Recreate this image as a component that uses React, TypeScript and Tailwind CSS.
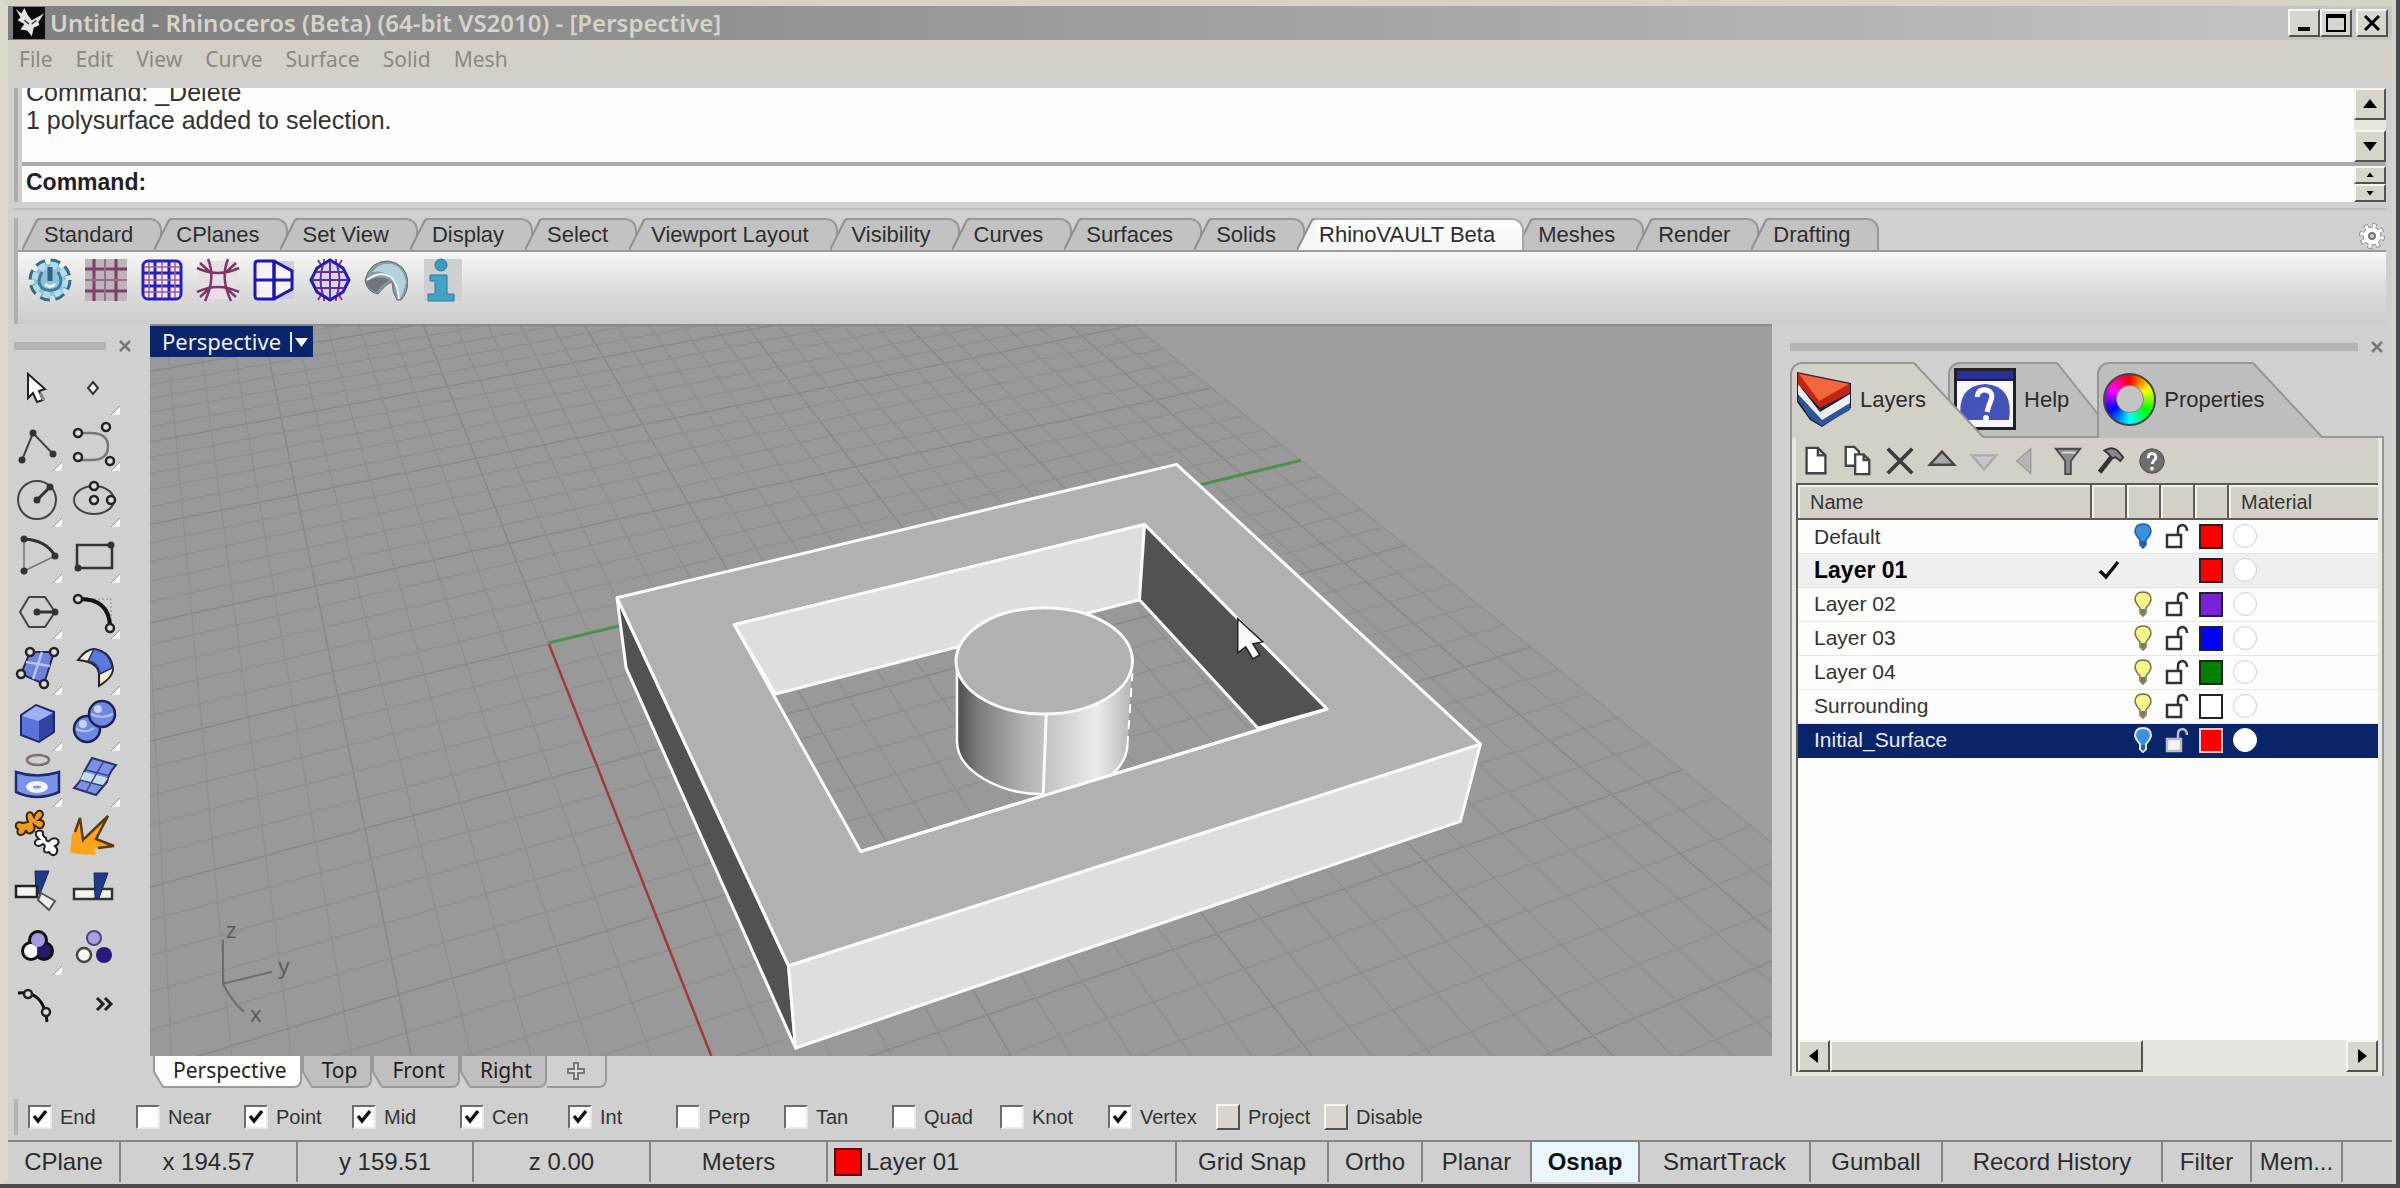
import React, { useState } from "react";

type Pt = [number, number];

const raised =
  "border-t-2 border-l-2 border-r-2 border-b-2 border-t-[#f6f5f1] border-l-[#f6f5f1] border-r-[#55524e] border-b-[#55524e] bg-[#d8d5cd]";

/* ---------- title bar and menu ---------- */

function RhinoLogo() {
  return (
    <svg viewBox="0 0 34 34" className="h-[32px] w-[34px] shrink-0" aria-hidden="true">
      <rect width="34" height="34" fill="#0b0b0b" />
      <path
        d="M3 2 L9 7 L12 1 L16 9 L20 14 L33 7 L27 16 L28 19 L22 22 L20 31 L15 25 L8 24 L12 18 L5 14 L8 11 Z"
        fill="#e4e4e4"
      />
      <path d="M12 14 L17 18 M20 18 L25 14" stroke="#333" strokeWidth="1.5" />
    </svg>
  );
}

function TitleBar() {
  return (
    <header className="flex h-[34px] items-center bg-linear-to-r from-[#7e7e7e] via-[#a0a0a0] to-[#c6c6c6] pl-1 pr-1">
      <RhinoLogo />
      <h1 className="grow truncate pl-1 font-['Noto_Sans',sans-serif] text-[24px] font-semibold leading-8 text-[#d6d3cb]">
        Untitled - Rhinoceros (Beta) (64-bit VS2010) - [Perspective]
      </h1>
      <button aria-label="Minimize" className={`flex h-7 w-8 items-end justify-center pb-1 ${raised}`}>
        <span className="h-1 w-3 bg-black" />
      </button>
      <button aria-label="Maximize" className={`flex h-7 w-8 items-center justify-center ${raised}`}>
        <span className="h-[18px] w-5 border-2 border-t-4 border-black" />
      </button>
      <button aria-label="Close" className={`ml-1 flex h-7 w-8 items-center justify-center ${raised}`}>
        <svg viewBox="0 0 18 16" className="h-4 w-[18px]" aria-hidden="true">
          <path d="M2 1 L16 15 M16 1 L2 15" stroke="#000" strokeWidth="3" />
        </svg>
      </button>
    </header>
  );
}

function MenuBar() {
  const items = ["File", "Edit", "View", "Curve", "Surface", "Solid", "Mesh"];
  return (
    <nav className="flex h-10 items-center gap-[23px] bg-[#d3d0c8] pl-[11px] font-['Noto_Sans',sans-serif] text-[21px] text-[#8b8880]">
      {items.map((m) => (
        <button key={m}>{m}</button>
      ))}
    </nav>
  );
}

function Tri({ dir, small }: { dir: "up" | "down" | "left" | "right"; small?: boolean }) {
  const d = {
    up: "M8 3 L15 12 L1 12 Z",
    down: "M8 13 L15 4 L1 4 Z",
    left: "M3 8 L12 1 L12 15 Z",
    right: "M13 8 L4 1 L4 15 Z",
  }[dir];
  return (
    <svg viewBox="0 0 16 16" className={small ? "size-2" : "size-4"} aria-hidden="true">
      <path d={d} fill="#000" />
    </svg>
  );
}

function CommandArea() {
  return (
    <section className="px-[6px] pt-2">
      <div className="flex border-l-4 border-[#adadad]">
        <div className="ml-1 min-w-0 grow">
          <div className="flex">
            <div className="flex h-[74px] grow flex-col justify-end overflow-hidden bg-[#fdfdfd] pl-1 text-[25px] leading-7 text-[#333]">
              <p>Command: _Delete</p>
              <p>1 polysurface added to selection.</p>
              <p className="h-7 shrink-0" />
            </div>
            <div className="flex w-8 flex-col justify-between bg-[#e9e6df]">
              <button aria-label="Scroll history up" className={`flex h-8 items-center justify-center ${raised}`}>
                <Tri dir="up" />
              </button>
              <button aria-label="Scroll history down" className={`flex h-8 items-center justify-center ${raised}`}>
                <Tri dir="down" />
              </button>
            </div>
          </div>
          <div className="flex border-t-4 border-[#a9a9a9]">
            <label className="flex h-9 grow items-center bg-[#fdfdfd] pb-1 pl-1 text-[23px] font-bold text-[#222]">
              Command:
              <input className="ml-2 grow bg-transparent font-normal outline-none" />
            </label>
            <div className="flex w-8 flex-col">
              <button aria-label="Previous line" className={`flex grow items-center justify-center ${raised}`}>
                <Tri dir="up" small />
              </button>
              <button aria-label="Next line" className={`flex grow items-center justify-center ${raised}`}>
                <Tri dir="down" small />
              </button>
            </div>
          </div>
        </div>
      </div>
    </section>
  );
}

/* ---------- tool tabs ---------- */

const toolTabs = [
  "Standard", "CPlanes", "Set View", "Display", "Select", "Viewport Layout", "Visibility",
  "Curves", "Surfaces", "Solids", "RhinoVAULT Beta", "Meshes", "Render", "Drafting",
];

function ToolTab({ name, active, onClick }: { name: string; active: boolean; onClick: () => void }) {
  return (
    <button
      role="tab"
      aria-selected={active}
      onClick={onClick}
      className={`relative -mr-2 flex h-8 ${active ? "z-10" : ""}`}
    >
      <svg viewBox="0 0 18 32" className="h-8 w-[18px] shrink-0" aria-hidden="true">
        <path d="M0 32 L14 4 Q15 1 18 1 L18 32 Z" fill={active ? "#f6f6f6" : "#c2c2c2"} />
        <path d="M0 32 L14 4 Q15 1 18 1" fill="none" stroke="#8f8f8f" strokeWidth="2" />
      </svg>
      <span
        className={`h-8 whitespace-nowrap rounded-tr-xl border-r-2 border-t-2 pl-1 pr-[27px] leading-[30px] ${
          active ? "border-[#a8a8a8] bg-linear-to-b from-white to-[#f4f4f4]" : "border-[#989898] bg-[#c2c2c2]"
        }`}
      >
        {name}
      </span>
    </button>
  );
}

function Gear() {
  return (
    <svg viewBox="0 0 28 28" className="size-7" aria-hidden="true">
      <circle cx="14" cy="14" r="10" fill="none" stroke="#8a8a8a" strokeWidth="6" strokeDasharray="4 3.85" />
      <circle cx="14" cy="14" r="9" fill="#fff" stroke="#8a8a8a" strokeWidth="1" />
      <circle cx="14" cy="14" r="10" fill="none" stroke="#fff" strokeWidth="4" strokeDasharray="3 4.85" strokeDashoffset="-.5" />
      <circle cx="14" cy="14" r="3" fill="#ccc" stroke="#777" strokeWidth="2" />
    </svg>
  );
}

const vaultIcons: { label: string; art: React.ReactNode }[] = [
  {
    label: "Settings",
    art: (
      <>
        <circle cx="22" cy="22" r="18" fill="none" stroke="#2f6f8c" strokeWidth="7" strokeDasharray="9 5.14" />
        <circle cx="22" cy="22" r="16" fill="#8fc3da" />
        <circle cx="22" cy="22" r="15" fill="none" stroke="#b5dced" strokeWidth="7" strokeDasharray="7 4.78" />
        <path d="M14 14 Q8 24 14 30 Q22 35 30 30 Q36 24 30 14" fill="none" stroke="#3a7f9c" strokeWidth="3" />
        <path d="M22 9 V23" stroke="#2b6580" strokeWidth="5" />
        <path d="M17 26 Q22 31 27 26" fill="none" stroke="#e5f5fb" strokeWidth="3" />
      </>
    ),
  },
  {
    label: "Form diagram",
    art: (
      <>
        <rect x="1" y="1" width="42" height="42" fill="#bdb5ba" />
        <path d="M10 1 V43 M32 1 V43 M1 11 H43 M1 33 H43" stroke="#7d3f66" strokeWidth="3" />
        <path d="M21 1 V43 M1 22 H43" stroke="#94708a" strokeWidth="2" />
      </>
    ),
  },
  {
    label: "Force diagram",
    art: (
      <>
        <rect x="3" y="3" width="38" height="38" rx="5" fill="#f2e9f6" stroke="#2a20b8" strokeWidth="3" />
        <path d="M15 3 V41 M29 3 V41 M3 15 H41 M3 28 H41" stroke="#2a20b8" strokeWidth="3" />
        <path d="M9 4 V40 M22 4 V40 M35 4 V40 M4 9 H40 M4 22 H40 M4 34 H40" stroke="#9a5aa8" strokeWidth="1.5" />
      </>
    ),
  },
  {
    label: "Relax",
    art: (
      <>
        <rect x="3" y="3" width="38" height="38" fill="#e8dfe5" />
        <path
          d="M12 1 Q20 20 9 43 M32 1 Q24 20 35 43 M1 10 Q22 20 43 10 M1 34 Q22 24 43 34 M4 5 L16 16 M40 5 L28 16 M4 39 L16 28 M40 39 L28 28"
          fill="none"
          stroke="#7c3767"
          strokeWidth="2.5"
        />
      </>
    ),
  },
  {
    label: "Horizontal equilibrium",
    art: (
      <>
        <rect x="20" y="3" width="22" height="38" fill="#cfcbea" />
        <path d="M22 3 H6 Q3 3 3 6 V38 Q3 41 6 41 H22 Z M22 3 L40 13 V31 L22 41" fill="#f4f2fb" stroke="#1f18ad" strokeWidth="3" />
        <path d="M22 3 V41 M3 22 H41" stroke="#1f18ad" strokeWidth="3" />
      </>
    ),
  },
  {
    label: "Vertical equilibrium",
    art: (
      <>
        <path d="M10 2 L34 42 M34 2 L10 42 M16 1 V43 M28 1 V43" stroke="#8d3c6f" strokeWidth="2" />
        <path d="M22 2 L35 10 L41 22 L35 34 L22 42 L9 34 L3 22 L9 10 Z" fill="#dcd3f0" stroke="#2119b8" strokeWidth="3" />
        <path d="M15 7 Q10 22 15 37 M29 7 Q34 22 29 37 M22 3 V41 M4 22 H40 M8 14 H36 M8 30 H36" fill="none" stroke="#5c2fa5" strokeWidth="2" />
      </>
    ),
  },
  {
    label: "Vault surface",
    art: (
      <>
        <path d="M1 22 Q6 3 24 3 Q42 5 44 24 Q43 36 37 42 H33 Q28 34 28 24 Q22 26 14 36 Q3 34 1 22 Z" fill="#8e9a9f" stroke="#5d6a70" strokeWidth="1" />
        <path d="M8 14 Q16 4 28 6 Q40 10 42 24 Q40 34 36 40 Q34 24 27 18 Q18 12 8 14 Z" fill="#b3d3dc" />
        <path d="M3 22 Q16 12 27 19 Q34 26 35 41" fill="none" stroke="#e8f4f6" strokeWidth="2" />
        <path d="M2 24 Q14 16 26 22 Q18 26 13 34 Q4 32 2 24 Z" fill="#6f7578" />
      </>
    ),
  },
  {
    label: "About",
    art: (
      <>
        <rect x="4" y="1" width="38" height="42" fill="#cfcfcf" />
        <circle cx="21" cy="7" r="6" fill="#3a9cc0" stroke="#2b7896" strokeWidth="1" />
        <path d="M10 17 H27 V36 H34 V43 H8 V36 H15 V23 H10 Z" fill="#43a3c6" stroke="#2b7896" strokeWidth="1" />
      </>
    ),
  },
];

function ToolTabs() {
  const [tab, setTab] = useState("RhinoVAULT Beta");
  return (
    <section className="mt-[6px] px-[6px]">
      <div className="border-t-2 border-[#bcbcbc] pt-2">
        <div className="border-l-4 border-[#b0b0b0]">
          <div className="flex items-end justify-between pl-1 text-[22px] text-[#2e2e2e]">
            <div role="tablist" className="flex">
              {toolTabs.map((t) => (
                <ToolTab key={t} name={t} active={t === tab} onClick={() => setTab(t)} />
              ))}
            </div>
            <button aria-label="Toolbar options">
              <Gear />
            </button>
          </div>
          <div className="flex h-[74px] items-center gap-3 border-t-2 border-[#9b9b9b] bg-linear-to-b from-[#f7f7f7] via-[#dedede] to-[#cccccc] pb-4 pl-[10px]">
            {vaultIcons.map((i) => (
              <button key={i.label} aria-label={i.label} className="size-11">
                <svg viewBox="0 0 44 44" className="size-11" aria-hidden="true">
                  {i.art}
                </svg>
              </button>
            ))}
          </div>
        </div>
      </div>
    </section>
  );
}

/* ---------- left palette ---------- */

const ln = { fill: "none", stroke: "#444", strokeWidth: 2 } as const;
const dot = (x: number, y: number) => <circle key={`d${x},${y}`} cx={x} cy={y} r="3.5" fill="#333" />;
const ring = (x: number, y: number) => (
  <circle key={`r${x},${y}`} cx={x} cy={y} r="4" fill="#ddd" stroke="#222" strokeWidth="2.5" />
);

const palette: { label: string; flyout?: boolean; art: React.ReactNode }[] = [
  {
    label: "Select",
    art: (
      <>
        <path d="M20 14 V38 L25 33 L29 42 L35 40 L31 31 L37 29 Z" fill="#fff" stroke="#222" strokeWidth="2" />
        <path d="M32 33 L36 40" stroke="#888" strokeWidth="3" />
      </>
    ),
  },
  { label: "Point", flyout: true, art: <path d="M27 22 L32 28 L27 34 L22 28 Z" fill="#eee" stroke="#333" strokeWidth="2" /> },
  {
    label: "Polyline",
    flyout: true,
    art: (
      <>
        <path d="M14 44 L25 17 L45 38" {...ln} />
        {dot(14, 44)}
        {dot(25, 17)}
        {dot(45, 38)}
      </>
    ),
  },
  {
    label: "Curve",
    flyout: true,
    art: (
      <>
        <path d="M12 17 H26 Q42 18 42 30 Q42 44 26 44 H12" fill="none" stroke="#777" strokeWidth="2.5" />
        {ring(12, 17)}
        {ring(12, 41)}
        {ring(40, 11)}
        {ring(44, 45)}
      </>
    ),
  },
  {
    label: "Circle",
    flyout: true,
    art: (
      <>
        <circle cx="29" cy="28" r="19" {...ln} />
        <path d="M29 28 L42 15" stroke="#333" strokeWidth="3" />
        {dot(29, 28)}
        {dot(42, 15)}
      </>
    ),
  },
  {
    label: "Ellipse",
    flyout: true,
    art: (
      <>
        <ellipse cx="28" cy="28" rx="20" ry="14" {...ln} />
        {ring(28, 14)}
        {ring(28, 28)}
        {ring(45, 28)}
      </>
    ),
  },
  {
    label: "Arc",
    flyout: true,
    art: (
      <>
        <path d="M16 43 V11 M16 43 L47 28" stroke="#777" strokeWidth="1.5" />
        <path d="M16 11 Q38 12 47 28" fill="none" stroke="#333" strokeWidth="3" />
        {dot(16, 11)}
        {dot(16, 43)}
        {dot(47, 28)}
      </>
    ),
  },
  {
    label: "Rectangle",
    flyout: true,
    art: (
      <>
        <rect x="11" y="17" width="35" height="23" fill="none" stroke="#333" strokeWidth="2.5" />
        {dot(45, 17)}
        {dot(12, 40)}
      </>
    ),
  },
  {
    label: "Polygon",
    flyout: true,
    art: (
      <>
        <path d="M12 28 L21 13 H37 L47 28 L37 43 H21 Z" {...ln} />
        <path d="M29 28 H47" stroke="#333" strokeWidth="3" />
        {dot(29, 28)}
        {dot(47, 28)}
      </>
    ),
  },
  {
    label: "Fillet",
    flyout: true,
    art: (
      <>
        <path d="M12 15 H45 V44" fill="none" stroke="#888" strokeWidth="1" strokeDasharray="2 2" />
        <path d="M12 15 Q44 14 44 44" fill="none" stroke="#111" strokeWidth="4" />
        {ring(12, 15)}
        {ring(44, 44)}
      </>
    ),
  },
  {
    label: "Surface from points",
    flyout: true,
    art: (
      <>
        <path d="M22 12 H46 L36 44 L13 34 Z" fill="#6f82d8" stroke="#222a60" strokeWidth="2" />
        <path d="M34 12 L25 39 M18 22 L42 26" stroke="#b9c4f4" strokeWidth="2.5" />
        {ring(22, 12)}
        {ring(46, 12)}
        {ring(13, 34)}
        {ring(36, 44)}
      </>
    ),
  },
  {
    label: "Surface",
    flyout: true,
    art: (
      <>
        <path d="M12 20 Q20 9 28 9 Q46 12 47 30 Q46 38 33 46 V36 Q34 22 12 20 Z" fill="#f4eed2" stroke="#222" strokeWidth="2" />
        <path d="M28 9 Q44 12 46 28 L34 34 Q32 22 22 21 Z" fill="#5c78de" stroke="#26326f" strokeWidth="1.5" />
      </>
    ),
  },
  {
    label: "Box",
    flyout: true,
    art: (
      <>
        <path d="M13 19 L28 9 L46 16 V36 L31 46 L13 39 Z" fill="#5b74dc" stroke="#1d2763" strokeWidth="2" />
        <path d="M14 20 L28 10 L45 17 L30 25 Z" fill="#9db2f6" />
        <path d="M31 25 L45 17 V36 L31 45 Z" fill="#31459f" />
      </>
    ),
  },
  {
    label: "Boolean",
    flyout: true,
    art: (
      <>
        <circle cx="21" cy="33" r="13" fill="#6f88e2" stroke="#1a2358" strokeWidth="2.5" />
        <circle cx="36" cy="18" r="13" fill="#6f88e2" stroke="#1a2358" strokeWidth="2.5" />
        <path d="M10 33 Q20 38 28 32 M25 18 Q36 24 47 18" fill="none" stroke="#b5c4f8" strokeWidth="2" />
        <circle cx="17" cy="28" r="4" fill="#c6d3fb" />
        <circle cx="32" cy="13" r="4" fill="#c6d3fb" />
      </>
    ),
  },
  {
    label: "Project",
    flyout: true,
    art: (
      <>
        <ellipse cx="30" cy="8" rx="11" ry="5" fill="none" stroke="#806c68" strokeWidth="2.5" />
        <path d="M8 20 Q29 27 51 20 V40 Q29 50 8 40 Z" fill="#7b93e8" stroke="#1c2a70" strokeWidth="2.5" />
        <ellipse cx="29" cy="35" rx="11" ry="6" fill="#f2f5ff" />
        <ellipse cx="29" cy="35" rx="4" ry="1.5" fill="#7b93e8" />
      </>
    ),
  },
  {
    label: "Mesh",
    flyout: true,
    art: (
      <>
        <path d="M26 6 L50 13 Q42 22 41 30 L30 43 L8 36 Q16 28 18 20 Z" fill="#7e92e4" stroke="#26336f" strokeWidth="2" />
        <path d="M18 20 L42 26 L36 34 L14 28 Z" fill="#c4dbe8" />
        <path d="M38 9 Q30 22 20 40 M20 18 L44 24 M14 28 L37 34" fill="none" stroke="#3a4788" strokeWidth="1.5" />
      </>
    ),
  },
  {
    label: "Join",
    art: (
      <>
        <path
          d="M19 6 Q21 3 24 5 L26 9 Q27 5 30 3 Q35 2 35 7 Q34 10 31 12 Q36 12 36 16 Q35 21 30 20 L26 17 Q28 23 23 25 Q19 27 18 22 Q17 27 12 27 Q8 26 10 21 Q7 20 8 16 Q10 13 15 15 L20 14 Q18 9 19 6 Z"
          fill="#f39a1f"
          stroke="#3a2608"
          strokeWidth="2"
        />
        <path
          d="M28 24 Q32 21 35 24 Q34 28 38 30 Q38 34 41 33 Q46 28 50 32 Q52 36 47 38 Q51 42 48 46 Q44 49 41 44 Q36 46 36 41 Q38 37 35 36 Q30 40 27 36 Q26 32 31 31 Q27 28 28 24 Z"
          fill="#fff"
          stroke="#222"
          strokeWidth="2"
        />
      </>
    ),
  },
  {
    label: "Explode",
    art: (
      <>
        <path d="M6 27 L13 16 L17 33 L40 10 L30 31 L46 38 L28 41 L30 47 L12 46 L4 44 Z" fill="#f8a51d" />
        <path d="M9 24 L14 10 L17 32 L42 8 L30 31 L48 38 L32 40" fill="none" stroke="#5b3a10" strokeWidth="2.5" />
      </>
    ),
  },
  {
    label: "Trim",
    art: (
      <>
        <path d="M27 7 H41 L32 30 L28 30 Z" fill="#1f3a86" stroke="#14265c" />
        <path d="M8 22 H29 V33 H8 Z" fill="#f5f3ec" stroke="#222" strokeWidth="2.5" />
        <path d="M33 29 L47 37 L41 46 L30 36 Z" fill="#eee" stroke="#555" strokeWidth="2" />
      </>
    ),
  },
  {
    label: "Split",
    art: (
      <>
        <path d="M8 25 H46 V35 H8 Z" fill="#f5f3ec" stroke="#333" strokeWidth="2.5" />
        <path d="M28 9 H42 L33 34 H29 Z" fill="#1f3a86" stroke="#14265c" />
      </>
    ),
  },
  {
    label: "Group",
    flyout: true,
    art: (
      <>
        <g fill="none" stroke="#111" strokeWidth="6">
          <circle cx="30" cy="20" r="7" />
          <circle cx="23" cy="31" r="7" />
          <circle cx="36" cy="31" r="7" />
        </g>
        <circle cx="23" cy="31" r="7" fill="#fff" />
        <circle cx="36" cy="31" r="7" fill="#271a6c" />
        <circle cx="30" cy="20" r="7" fill="#a49ae0" />
      </>
    ),
  },
  {
    label: "Ungroup",
    art: (
      <>
        <circle cx="28" cy="18" r="7" fill="#a9a0e2" stroke="#4a4480" strokeWidth="2" />
        <circle cx="18" cy="35" r="7" fill="#fbf8ee" stroke="#444" strokeWidth="2.5" />
        <circle cx="38" cy="35" r="8" fill="#271a7c" />
      </>
    ),
  },
  {
    label: "Edit points",
    art: (
      <>
        <path d="M10 17 Q36 14 39 46" fill="none" stroke="#111" strokeWidth="3" />
        {ring(20, 18)}
        {ring(38, 36)}
      </>
    ),
  },
  { label: "More tools", art: <path d="M31 22 L37 28 L31 34 M39 22 L45 28 L39 34" fill="none" stroke="#222" strokeWidth="3" /> },
];

function CloseX({ label }: { label: string }) {
  return (
    <button aria-label={label} className="shrink-0">
      <svg viewBox="0 0 14 14" className="size-3.5" aria-hidden="true">
        <path d="M2 2 L12 12 M12 2 L2 12" stroke="#777" strokeWidth="2.5" />
      </svg>
    </button>
  );
}

function Palette() {
  return (
    <aside className="w-[142px] shrink-0">
      <div className="flex h-[36px] items-center gap-3 pl-[6px] pt-2">
        <div className="h-2 w-[92px] bg-[#b4b4b4]" />
        <CloseX label="Close palette" />
      </div>
      <div className="grid w-[116px] grid-cols-2">
        {palette.map((p) => (
          <button key={p.label} aria-label={p.label} className="h-14">
            <svg viewBox="0 0 58 56" className="h-14 w-full" aria-hidden="true">
              {p.art}
              {p.flyout && <path d="M54 46 V55 H45 Z" fill="#fff" />}
              {p.flyout && <path d="M54 46 L45 55" stroke="#999" strokeWidth="1" />}
            </svg>
          </button>
        ))}
      </div>
    </aside>
  );
}

/* ---------- viewport ---------- */

const ORIGIN: Pt = [550, 641];
const VANISH_X: Pt = [92, -522];
const VANISH_Y: Pt = [5376, -537];
const STEP_X = 0.0189;
const STEP_Y = 0.00836;

function project(u: number, v: number): string {
  const a = u * STEP_X;
  const b = v * STEP_Y;
  const w = 1 + a + b;
  const x = (ORIGIN[0] + a * VANISH_X[0] + b * VANISH_Y[0]) / w;
  const y = (ORIGIN[1] + a * VANISH_X[1] + b * VANISH_Y[1]) / w;
  return `${x.toFixed(1)} ${y.toFixed(1)}`;
}

const U_FAR = 40;
const U_NEAR = -33;
const V_MAX = 22;

function gridPath(major: boolean): string {
  const parts: string[] = [];
  for (let v = -V_MAX; v <= V_MAX; v++) {
    if ((v % 5 === 0) === major) parts.push(`M${project(U_FAR, v)} L${project(U_NEAR, v)}`);
  }
  for (let u = U_NEAR; u <= U_FAR; u++) {
    if ((u % 5 === 0) === major) parts.push(`M${project(u, -V_MAX)} L${project(u, V_MAX)}`);
  }
  return parts.join(" ");
}

const minorGrid = gridPath(false);
const majorGrid = gridPath(true);

function Scene() {
  return (
    <svg
      viewBox="150 324 1622 728"
      preserveAspectRatio="xMidYMid slice"
      className="h-full w-full"
      role="img"
      aria-label="Shaded frame with a cylinder on the construction plane"
    >
      <defs>
        <linearGradient id="cyl" x1="0" x2="1" y1="0" y2="0">
          <stop offset="0" stopColor="#4c4c4c" />
          <stop offset="0.12" stopColor="#7c7c7c" />
          <stop offset="0.4" stopColor="#b4b4b4" />
          <stop offset="0.6" stopColor="#d0d0d0" />
          <stop offset="0.8" stopColor="#ececec" />
          <stop offset="1" stopColor="#b4b4b4" />
        </linearGradient>
      </defs>
      <rect x="-400" y="0" width="3000" height="1400" fill="#9d9d9d" />
      <path
        d={`M${project(U_FAR, -V_MAX)} L${project(U_FAR, V_MAX)} L${project(U_NEAR, V_MAX)} L${project(U_NEAR, -V_MAX)} Z`}
        fill="#999999"
      />
      <path d={minorGrid} stroke="#8f8f8f" strokeWidth="1.2" fill="none" />
      <path d={majorGrid} stroke="#898989" strokeWidth="1.4" fill="none" />
      <path d="M550 641 L712 1052" stroke="#a03a3c" strokeWidth="2.5" />
      <path d="M550 640 L1300 458" stroke="#4a9150" strokeWidth="3" />

      <g stroke="#fafafa" strokeWidth="3" strokeLinejoin="round">
        <path d="M618 595 L789 962 L796 1044 L627 665 Z" fill="#525252" />
        <path d="M789 962 L1479 741 L1459 818 L796 1044 Z" fill="#dedede" />
        <path
          fillRule="evenodd"
          d="M618 595 L1176 462 L1479 741 L789 962 Z M735 622 L861 848 L1326 706 L1144 522 Z"
          fill="#b1b1b1"
        />
        <path d="M735 622 L1144 522 L1139 597 L776 691 Z" fill="#dedede" />
        <path d="M1144 522 L1326 706 L1257 725 L1139 597 Z" fill="#525252" />
      </g>

      <path
        d="M957 658 V738 C957 768 1000 791 1043 791 L1112 771 Q1126 758 1127 742 L1132 658 Z"
        fill="url(#cyl)"
      />
      <path d="M957 658 V738 C957 768 1000 791 1043 791 M1112 771 Q1126 758 1127 742" fill="none" stroke="#fafafa" strokeWidth="2.5" />
      <path d="M1127 742 L1132 670" stroke="#fafafa" strokeWidth="2" strokeDasharray="9 7" />
      <path d="M1046 711 L1043 791" stroke="#fafafa" strokeWidth="3" />
      <ellipse cx="1044" cy="658" rx="88" ry="53" fill="#b1b1b1" stroke="#fafafa" strokeWidth="3" />
      <path d="M861 848 L1326 706" stroke="#fafafa" strokeWidth="3" />

      <path d="M1237 616 V650 L1245 644 L1252 656 L1259 652 L1252 641 L1262 639 Z" fill="#fafafa" stroke="#222" strokeWidth="1.5" />

      <path d="M225 936 V980 L274 968 M225 980 Q234 998 246 1008" fill="none" stroke="#6c6c6c" strokeWidth="2" />
      <g fill="#5c5c5c" fontSize="22" fontFamily="'Noto Sans', sans-serif">
        <text x="228" y="934">z</text>
        <text x="280" y="970">y</text>
        <text x="252" y="1018">x</text>
      </g>
    </svg>
  );
}

function ViewTab({ name, active, onClick }: { name: string; active: boolean; onClick: () => void }) {
  return (
    <button
      role="tab"
      aria-selected={active}
      onClick={onClick}
      className={`relative flex h-8 items-center rounded-b-lg border-b-2 border-r-2 border-[#999] pl-5 pr-[13px] ${
        active ? "bg-white" : "bg-[#bfbfbf]"
      }`}
    >
      <svg viewBox="0 0 12 32" className="absolute left-0 top-0 h-8 w-3" aria-hidden="true">
        <path d="M0 0 V16 L10 32 H0 Z" fill="#d0d0d0" />
        <path d="M1 0 V16 L10 31" fill="none" stroke="#999" strokeWidth="2" />
      </svg>
      {name}
    </button>
  );
}

function Viewport() {
  const [view, setView] = useState("Perspective");
  return (
    <main className="flex min-w-0 grow flex-col">
      <div className="relative min-h-0 grow basis-0 overflow-hidden border-t-2 border-[#8a8a8a]">
        <div className="absolute inset-0">
          <Scene />
        </div>
        <button className="absolute left-0 top-0 flex h-[31px] items-center gap-2 bg-[#0a246a] pl-3 pr-1 font-['Noto_Sans',sans-serif] text-[22px] text-[#eef0f8]">
          {view}
          <svg viewBox="0 0 20 24" className="h-6 w-5" aria-hidden="true">
            <path d="M2 2 V22" stroke="#dfe3f2" strokeWidth="2" />
            <path d="M6 8 H19 L12.5 17 Z" fill="#fff" />
          </svg>
        </button>
      </div>
      <div role="tablist" className="flex h-[38px] pl-[3px] font-['Noto_Sans',sans-serif] text-[21px] text-[#222]">
        {["Perspective", "Top", "Front", "Right"].map((v) => (
          <ViewTab key={v} name={v} active={v === view} onClick={() => setView(v)} />
        ))}
        <button aria-label="New viewport" className="relative flex h-8 w-[60px] items-center justify-center rounded-br-lg border-b-2 border-r-2 border-[#999] bg-[#d0d0d0]">
          <svg viewBox="0 0 20 20" className="size-5" aria-hidden="true">
            <path d="M8 2 H12 V8 H18 V12 H12 V18 H8 V12 H2 V8 H8 Z" fill="#ddd" stroke="#777" strokeWidth="2" />
          </svg>
        </button>
      </div>
    </main>
  );
}

/* ---------- layers panel ---------- */

function PanelTab({
  name, icon, fill, slant, className = "",
}: { name: string; icon: React.ReactNode; fill: "active" | "idle"; slant: string; className?: string }) {
  const active = fill === "active";
  return (
    <button role="tab" aria-selected={active} className={`flex h-[76px] shrink-0 ${className}`}>
      <span
        className={`flex h-[76px] items-center gap-2 rounded-tl-xl border-l-2 border-t-2 border-[#959595] pb-1 pl-1 ${
          active ? "bg-[#d3d0c8]" : "bg-[#bebebe]"
        }`}
      >
        {icon}
        <span className="relative z-20 -mr-3">{name}</span>
      </span>
      <svg viewBox="0 0 70 76" preserveAspectRatio="none" className={`h-[76px] shrink-0 ${slant}`} aria-hidden="true">
        <path d="M0 1 L70 76 H0 Z" fill={active ? "#d3d0c8" : "#bebebe"} />
        <path d="M0 1 L70 76" stroke="#959595" strokeWidth="2" />
      </svg>
    </button>
  );
}

const LayersIcon = (
  <svg viewBox="0 0 56 58" className="h-[58px] w-14" aria-hidden="true">
    <path d="M1 2 L55 13 V38 L26 57 L14 50 L1 32 Z" fill="#16203c" />
    <path d="M2 20 L24 48 L54 32 V40 L26 56 L14 48 L2 30 Z" fill="#2f5596" />
    <path d="M2 14 L24 42 L54 24 V33 L26 50 L2 24 Z" fill="#eceef6" />
    <path d="M2 3 L54 14 V23 L24 38 L2 14 Z" fill="#c32513" />
    <path d="M3 4 L53 14 L23 31 Z" fill="#f2683c" />
  </svg>
);

const HelpIcon = (
  <svg viewBox="0 0 62 62" className="h-[62px] w-[62px]" aria-hidden="true">
    <rect x="1.5" y="1.5" width="59" height="59" fill="#f5f5fb" stroke="#222" strokeWidth="3" />
    <rect x="3" y="3" width="56" height="8" fill="#2a2f9c" />
    <path d="M2 12 H60" stroke="#222" strokeWidth="2" />
    <path d="M7 52 Q2 18 31 16 Q60 18 55 52 Z" fill="#4552b8" />
    <path d="M23 29 Q24 21 32 22 Q40 24 37 32 Q35 37 33 44" fill="none" stroke="#fff" strokeWidth="5" />
    <circle cx="32" cy="50" r="3" fill="#fff" />
  </svg>
);

const PropertiesIcon = (
  <span className="flex size-[53px] items-center justify-center rounded-full border-2 border-[#444] bg-[conic-gradient(#f00,#ff0,#0f0,#0ff,#00f,#f0f,#f00)]">
    <span className="size-7 rounded-full border border-[#888] bg-[#c4c4c4]" />
  </span>
);

const page = "M6 3 H18 L26 11 V30 H6 Z M18 3 V11 H26";
const panelTools: { label: string; art: React.ReactNode }[] = [
  { label: "New layer", art: <path d={page} fill="#fff" stroke="#444" strokeWidth="2.5" /> },
  {
    label: "New sublayer",
    art: (
      <>
        <path d="M3 2 H12 L17 7 V22 H3 Z" fill="#fff" stroke="#444" strokeWidth="2.5" />
        <path d="M13 10 H22 L28 16 V31 H13 Z M22 10 V16 H28" fill="#fff" stroke="#444" strokeWidth="2.5" />
      </>
    ),
  },
  { label: "Delete", art: <path d="M3 4 L29 30 M29 4 L3 30" stroke="#3c3c3c" strokeWidth="4" /> },
  { label: "Move up", art: <path d="M16 7 L29 21 H3 Z" fill="#a9a9a9" stroke="#444" strokeWidth="2.5" /> },
  { label: "Move down", art: <path d="M16 26 L29 11 H3 Z" fill="#c9c9c9" stroke="#aaa" strokeWidth="2.5" /> },
  { label: "Move out", art: <path d="M6 17 L21 4 V30 Z" fill="#b4b4b4" stroke="#9c9c9c" strokeWidth="1.5" /> },
  {
    label: "Filter",
    art: (
      <>
        <path d="M3 4 H29 L19 17 V31 H13 V17 Z" fill="#8d8d8d" stroke="#4a4a4a" strokeWidth="2" />
        <path d="M9 8 H24" stroke="#ddd" strokeWidth="2" />
      </>
    ),
  },
  {
    label: "Tools",
    art: (
      <>
        <path d="M19 11 L5 29" stroke="#333" strokeWidth="5" />
        <path d="M10 6 Q18 1 24 6 L30 13 L27 17 L22 13 L18 14 L14 9 Z" fill="#888" stroke="#333" strokeWidth="2" />
      </>
    ),
  },
  {
    label: "Panel help",
    art: (
      <>
        <circle cx="16" cy="17" r="13" fill="#6e6e6e" stroke="#4c4c4c" />
        <path d="M12 14 Q12 9 16 9 Q21 10 20 14 Q17 17 16 20" fill="none" stroke="#fff" strokeWidth="3" />
        <circle cx="16" cy="25" r="2" fill="#fff" />
      </>
    ),
  },
];

type Layer = { name: string; swatch: string; bulb?: "on" | "off"; current?: boolean; selected?: boolean };

const layers: Layer[] = [
  { name: "Default", swatch: "bg-[#fb0000]", bulb: "off" },
  { name: "Layer 01", swatch: "bg-[#fb0000]", current: true },
  { name: "Layer 02", swatch: "bg-[#7a22d8]", bulb: "on" },
  { name: "Layer 03", swatch: "bg-[#0000fb]", bulb: "on" },
  { name: "Layer 04", swatch: "bg-[#008000]", bulb: "on" },
  { name: "Surrounding", swatch: "bg-white", bulb: "on" },
  { name: "Initial_Surface", swatch: "bg-[#fb0000]", bulb: "off", selected: true },
];

function Bulb({ state, selected }: { state: "on" | "off"; selected?: boolean }) {
  const fill = state === "on" ? "#f7f58c" : "#3d8fe0";
  const stroke = selected ? "#dfe8f4" : state === "on" ? "#77743c" : "#1f5c9c";
  return (
    <svg viewBox="0 0 20 26" className="mx-auto h-[26px] w-5" aria-hidden="true">
      <path d="M10 1 Q18 1 18 9 Q17 13 13 17 V22 L10 25 L7 22 V17 Q3 13 2 9 Q2 1 10 1 Z" fill={fill} stroke={stroke} strokeWidth={selected ? 2 : 1.5} />
      <path d="M8 18 H12 V22 L10 24 L8 22 Z" fill={state === "on" ? "#777" : "#1d62b0"} />
    </svg>
  );
}

function Lock({ selected }: { selected?: boolean }) {
  const c = selected ? "#b9bdc8" : "#333";
  return (
    <svg viewBox="0 0 24 26" className="mx-auto h-[26px] w-6" aria-hidden="true">
      <rect x="2" y="12" width="14" height="12" fill={selected ? "#f4f4f4" : "#fff"} stroke={c} strokeWidth="2.5" />
      <path d="M13 12 V7 Q13 2 18 2 Q22 3 22 8" fill="none" stroke={c} strokeWidth="2.5" />
    </svg>
  );
}

function LayerTable() {
  const th = "border-r-2 border-[#5e5c58] shadow-[inset_2px_2px_0_#f2f1ec]";
  return (
    <table className="w-full table-fixed border-collapse text-left text-[21px] text-[#333]">
      <colgroup>
        <col />
        <col className="w-[35px]" />
        <col className="w-[34px]" />
        <col className="w-[34px]" />
        <col className="w-[34px]" />
        <col className="w-[150px]" />
      </colgroup>
      <thead>
        <tr className="h-[34px] border-b-2 border-[#5e5c58] bg-[#d3d0c8] text-[20px]">
          <th className={`${th} pl-3 font-normal`}>Name</th>
          <th className={th} aria-label="Current" />
          <th className={th} aria-label="On" />
          <th className={th} aria-label="Lock" />
          <th className={th} aria-label="Color" />
          <th className="pl-3 font-normal shadow-[inset_2px_2px_0_#f2f1ec]">Material</th>
        </tr>
      </thead>
      <tbody>
        {layers.map((l) => (
          <tr
            key={l.name}
            className={`h-[34px] border-b ${
              l.selected
                ? "border-[#0a246a] bg-[#0a246a] text-[#e8ebf5]"
                : l.current
                  ? "border-[#dedede] bg-[#efefef] text-[23px] leading-7 font-bold text-black"
                  : "border-[#e6e6e6]"
            }`}
          >
            <td className="pl-4">{l.name}</td>
            <td>
              {l.current && (
                <svg viewBox="0 0 22 20" className="mx-auto h-5 w-[22px]" aria-label="Current layer">
                  <path d="M2 11 L8 17 L20 2" fill="none" stroke="#111" strokeWidth="3.5" />
                </svg>
              )}
            </td>
            <td>{l.bulb && <Bulb state={l.bulb} selected={l.selected} />}</td>
            <td>{l.bulb && <Lock selected={l.selected} />}</td>
            <td>
              <span className={`mx-auto block h-[25px] w-6 border-2 ${l.selected ? "border-[#f0c8c8]" : "border-[#222]"} ${l.swatch}`} />
            </td>
            <td className="pl-[5px]">
              <span className={`block size-6 rounded-full border bg-white ${l.selected ? "border-white" : "border-[#cfcfcf]"}`} />
            </td>
          </tr>
        ))}
      </tbody>
    </table>
  );
}

function LayersPanel() {
  return (
    <aside className="mb-[18px] flex w-[620px] shrink-0 flex-col pl-[18px] pr-2">
      <div className="flex h-[38px] shrink-0 items-center gap-3 pt-2">
        <div className="h-2 grow bg-[#b4b4b4]" />
        <CloseX label="Close panel" />
      </div>
      <div role="tablist" className="flex h-[76px] shrink-0 text-[22px] text-[#2c2c2c]">
        <PanelTab name="Layers" icon={LayersIcon} fill="active" slant="relative z-10 w-[70px]" className="relative z-10 -mr-9" />
        <PanelTab name="Help" icon={HelpIcon} fill="idle" slant="w-[60px]" className="-mr-5" />
        <PanelTab name="Properties" icon={PropertiesIcon} fill="idle" slant="w-[70px]" className="relative" />
      </div>
      <div className="-mt-[2px] flex min-h-0 grow flex-col border-x-2 border-t-2 border-[#959595] bg-[#e9e7e1] px-1 pb-1">
        <div className="flex h-[45px] shrink-0 items-center gap-[10px] bg-[#d3d0c8] pl-1">
          {panelTools.map((t) => (
            <button key={t.label} aria-label={t.label} className="size-8">
              <svg viewBox="0 0 32 34" className="h-8 w-8" aria-hidden="true">
                {t.art}
              </svg>
            </button>
          ))}
        </div>
        <div className="flex min-h-0 grow flex-col border-l-2 border-t-2 border-[#5e5c58] bg-[#fdfdfd]">
          <div className="grow">
            <LayerTable />
          </div>
          <div className="flex h-[32px] shrink-0 bg-[#e6e5df]">
            <button aria-label="Scroll left" className={`flex w-8 shrink-0 items-center justify-center ${raised}`}>
              <Tri dir="left" />
            </button>
            <div className={`w-[54%] ${raised}`} />
            <button aria-label="Scroll right" className={`ml-auto flex w-8 shrink-0 items-center justify-center ${raised}`}>
              <Tri dir="right" />
            </button>
          </div>
        </div>
      </div>
    </aside>
  );
}

/* ---------- object snaps and status bar ---------- */

const snaps: [string, boolean][] = [
  ["End", true], ["Near", false], ["Point", true], ["Mid", true], ["Cen", true], ["Int", true],
  ["Perp", false], ["Tan", false], ["Quad", false], ["Knot", false], ["Vertex", true],
];

function SnapBar() {
  return (
    <section className="flex h-[46px] items-center pl-[6px]">
      <div className="h-9 w-1 bg-[#b4b4b4]" />
      <div className="flex pl-[10px] text-[20px] text-[#333]">
        {snaps.map(([name, on]) => (
          <label key={name} className="relative flex w-[108px] items-center gap-2">
            <input
              type="checkbox"
              defaultChecked={on}
              className="peer size-6 shrink-0 appearance-none border-2 border-b-[#ece9e2] border-l-[#6e6c68] border-r-[#ece9e2] border-t-[#6e6c68] bg-white"
            />
            <svg viewBox="0 0 24 24" className="pointer-events-none absolute left-0 hidden size-6 peer-checked:block" aria-hidden="true">
              <path d="M6 11 L10 16 L18 6" fill="none" stroke="#111" strokeWidth="3.5" />
            </svg>
            {name}
          </label>
        ))}
        {["Project", "Disable"].map((name) => (
          <label key={name} className="flex w-[108px] items-center gap-2">
            <input type="checkbox" className={`h-[26px] w-6 shrink-0 appearance-none ${raised}`} />
            {name}
          </label>
        ))}
      </div>
    </section>
  );
}

function StatusBar() {
  const cell = "flex shrink-0 items-center justify-center border-r-2 border-[#858585]";
  return (
    <footer className="flex h-[42px] border-t-2 border-[#858585] text-[24px] text-[#2c2c2c]">
      <button className={`${cell} w-[113px]`}>CPlane</button>
      <span className={`${cell} w-[177px]`}>x 194.57</span>
      <span className={`${cell} w-[176px]`}>y 159.51</span>
      <span className={`${cell} w-[177px]`}>z 0.00</span>
      <button className={`${cell} w-[177px]`}>Meters</button>
      <button className="flex grow items-center gap-1 border-r-2 border-[#858585] pl-[6px]">
        <span className="h-7 w-7 border-2 border-[#5a1010] bg-[#fb0000]" />
        Layer 01
      </button>
      <button className={`${cell} w-[152px]`}>Grid Snap</button>
      <button className={`${cell} w-[94px]`}>Ortho</button>
      <button className={`${cell} w-[109px]`}>Planar</button>
      <button className={`${cell} w-[108px] bg-[#e9f6fc] text-[24px] font-bold text-[#111]`}>Osnap</button>
      <button className={`${cell} w-[171px]`}>SmartTrack</button>
      <button className={`${cell} w-[132px]`}>Gumball</button>
      <button className={`${cell} w-[220px]`}>Record History</button>
      <button className={`${cell} w-[89px]`}>Filter</button>
      <button className={`${cell} w-[91px]`}>Mem...</button>
      <span className="w-[49px] shrink-0" />
    </footer>
  );
}

export default function App() {
  return (
    <div className="flex min-h-screen flex-col border-b-4 border-r-4 border-[#4a4a4a] bg-[#d0d0d0] font-['Liberation_Sans',Arial,sans-serif]">
      <div className="flex grow flex-col border-l-8 border-r-4 border-t-[6px] border-b-2 border-b-[#d0d0d0] border-l-[#dcdacb] border-r-[#d6d5cc] border-t-[#d4d3c4]">
        <TitleBar />
        <MenuBar />
        <CommandArea />
        <ToolTabs />
        <div className="flex grow">
          <Palette />
          <Viewport />
          <LayersPanel />
        </div>
        <SnapBar />
        <StatusBar />
      </div>
    </div>
  );
}
